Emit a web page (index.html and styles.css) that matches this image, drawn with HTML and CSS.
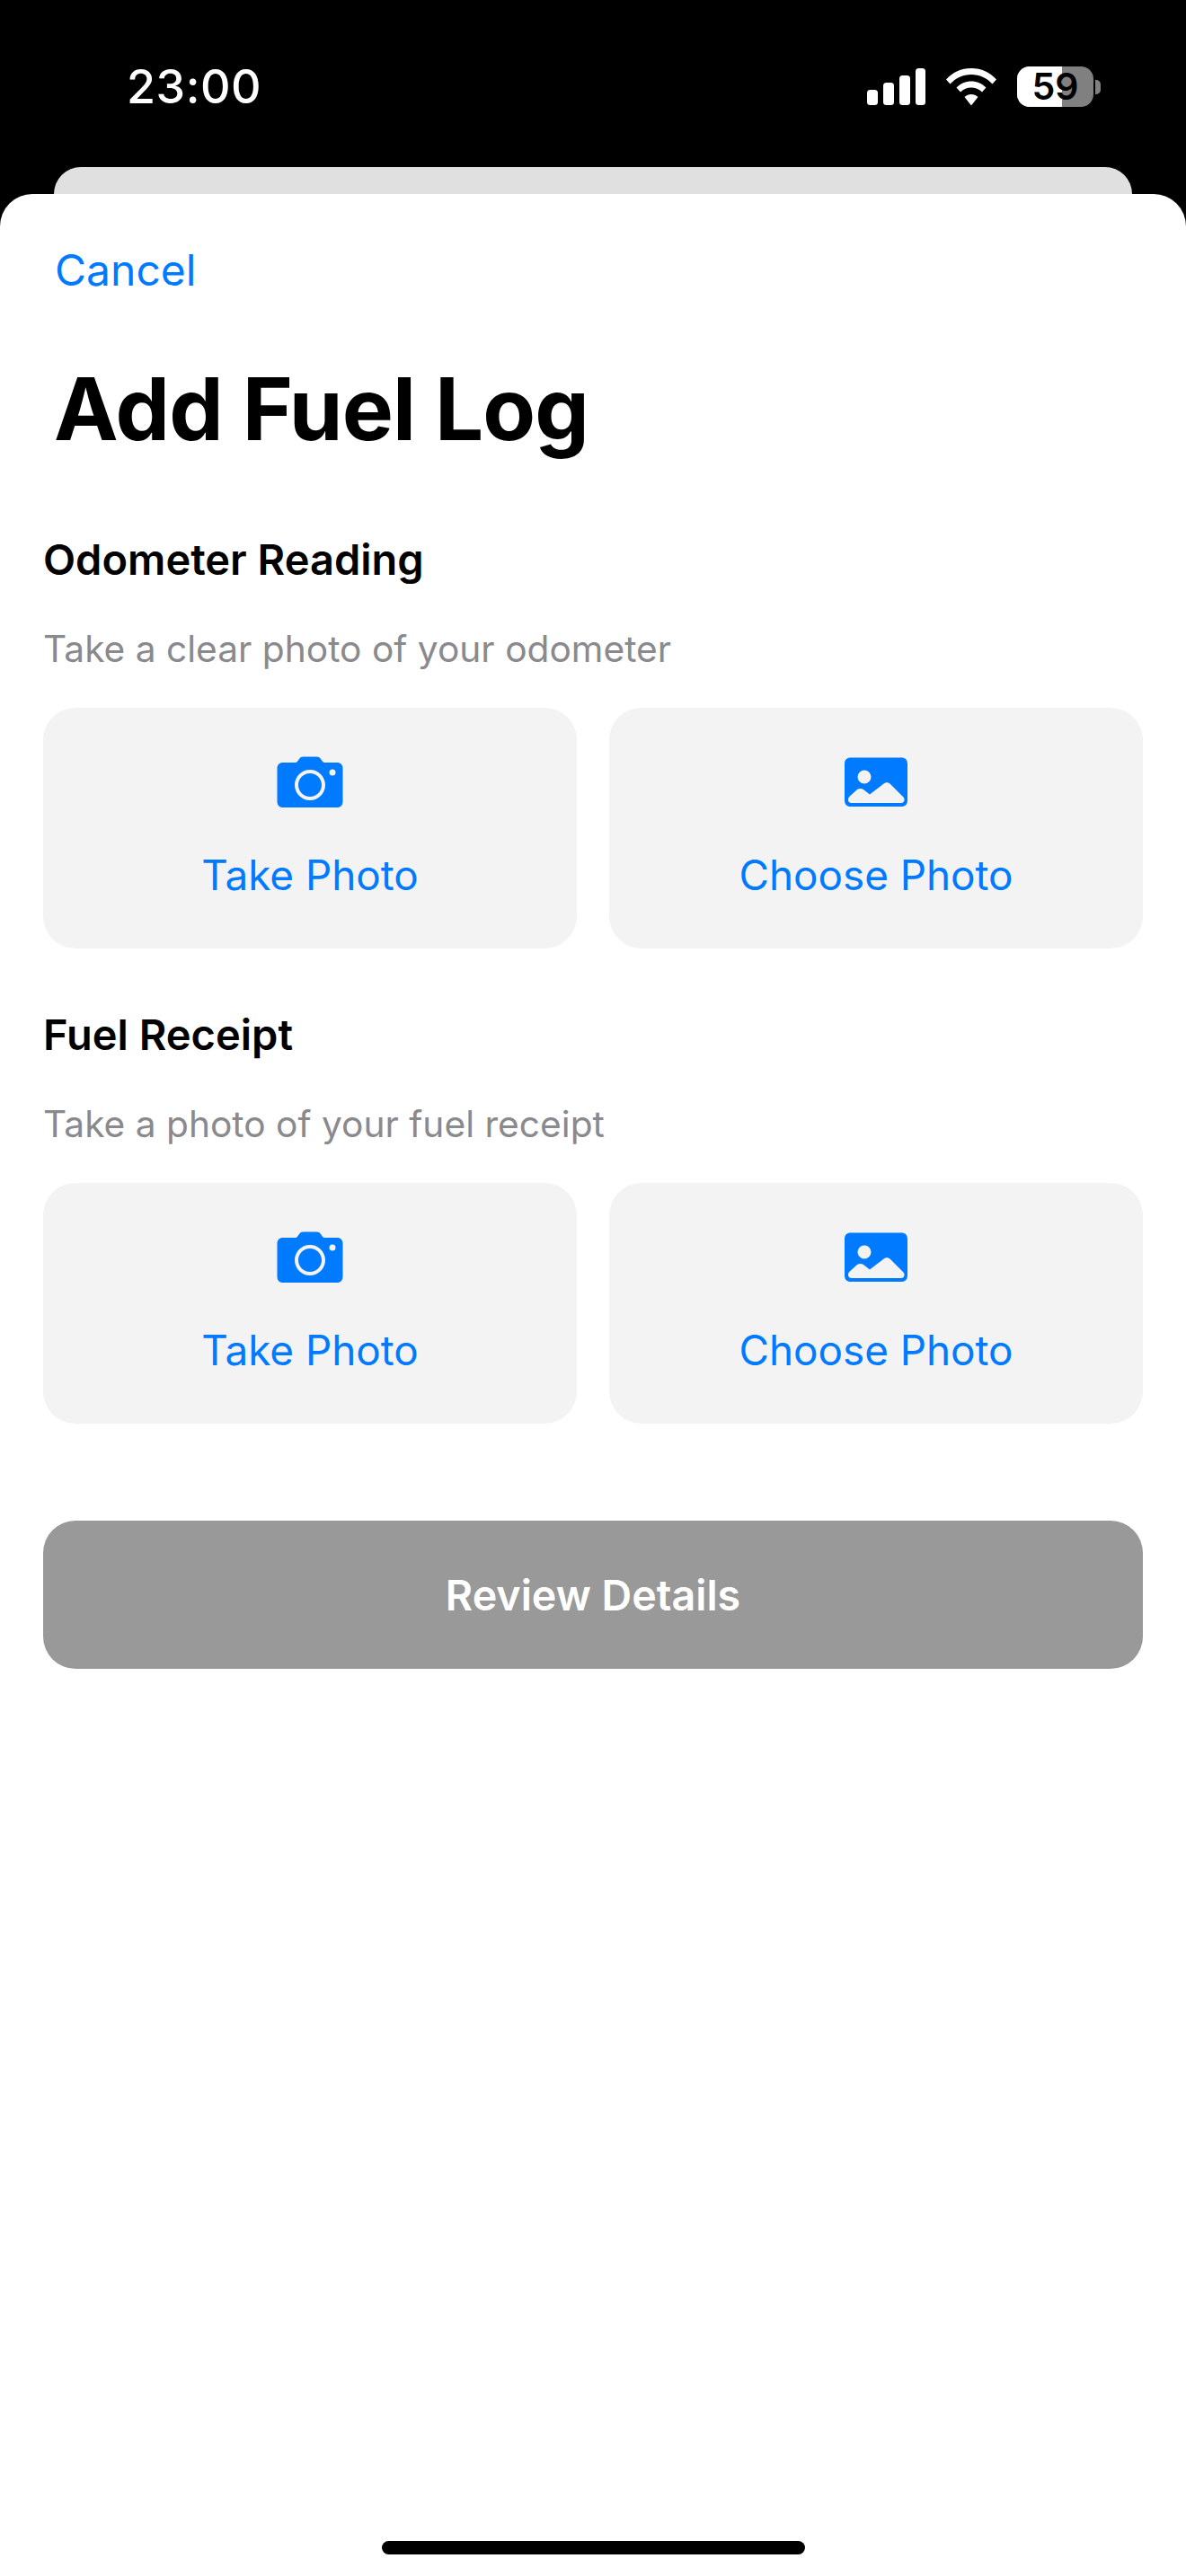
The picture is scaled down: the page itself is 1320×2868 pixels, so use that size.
FILE: index.html
```html
<!DOCTYPE html>
<html lang="en">
<head>
<meta charset="utf-8">
<title>Add Fuel Log</title>
<link rel="stylesheet" href="styles.css">
</head>
<body>
<div class="screen">
  <header class="status">
    <span class="time">23:00</span>
    <div class="indicators">
      <svg class="signal" width="65" height="42" viewBox="0 0 65 42"><rect x="0" y="24" width="12" height="17" rx="3.500"/><rect x="18" y="16" width="12" height="25" rx="3.500"/><rect x="36" y="8" width="12" height="33" rx="3.500"/><rect x="54" y="0" width="11" height="41" rx="3.500"/></svg>
      <svg class="wifi" width="58" height="42" viewBox="0 0 58 42"><path d="M29 0C40 0 50 4.500 57 12.500L52.500 17.500C46.500 11 38 7 29 7S11.500 11 5.500 17.500L1 12.500C8 4.500 18 0 29 0Z"/><path d="M29 14.500C35 14.500 41 17 45.500 21.500L41 26.500C37.500 23 33.500 21.500 29 21.500S20.500 23 17 26.500L12.500 21.500C17 17 23 14.500 29 14.500Z"/><path d="M29 29C31.800 29 34.500 30 36.500 32L29 41.500L21.500 32C23.500 30 26.200 29 29 29Z"/></svg>
      <div class="battery">
        <div class="battery-body"><div class="battery-fill"></div><span class="battery-level">59</span></div>
        <div class="battery-cap"></div>
      </div>
    </div>
  </header>
  <div class="back-card"></div>
  <main class="sheet">
    <button class="cancel">Cancel</button>
    <h1 class="title">Add Fuel Log</h1>

    <section class="section">
      <h2 class="section-title">Odometer Reading</h2>
      <p class="hint">Take a clear photo of your odometer</p>
      <div class="actions">
        <button class="action">
          <svg class="icon" width="74" height="58" viewBox="0 0 74 58"><path class="glyph" fill-rule="evenodd" d="M7 7H20C21.500 7 22.300 6.400 23.200 5.400L25 3C26.200 1.300 27.500 0.500 29.500 0.500H44.500C46.500 0.500 47.800 1.300 49 3L50.800 5.400C51.700 6.400 52.500 7 54 7H67C71 7 73.500 9.500 73.500 13.500V50C73.500 54.500 71 57 67 57H7C3 57 0.500 54.500 0.500 50V13.500C0.500 9.500 3 7 7 7ZM37 15C27.600 15 20 22.600 20 32S27.600 49 37 49 54 41.400 54 32 46.400 15 37 15ZM37 19C44.200 19 50 24.800 50 32S44.200 45 37 45 24 39.200 24 32 29.800 19 37 19ZM62 14.500A3.500 3.500 0 1 0 62 21.500A3.500 3.500 0 1 0 62 14.500Z"/></svg>
          <span class="action-label">Take Photo</span>
        </button>
        <button class="action">
          <svg class="icon" width="72" height="56" viewBox="0 0 72 56"><path class="glyph" fill-rule="evenodd" d="M8 0.500H64C68.500 0.500 71 3 71 7.500V48C71 52.500 68.500 55 64 55H8C3.500 55 1 52.500 1 48V7.500C1 3 3.500 0.500 8 0.500ZM23 14.500A7.500 7.500 0 1 0 23 29.500A7.500 7.500 0 1 0 23 14.500ZM5 47.500C5 49.800 6.500 51 8.500 51H64C66 51 67.500 49.800 67.500 47.500C67.500 46 67 45 66 44L52 30C49.500 27.500 46.500 27.500 44 30L29 41.500L22 36C20 34.500 17 34.500 15 36L6.500 43.800C5.500 44.800 5 46 5 47.500Z"/></svg>
          <span class="action-label">Choose Photo</span>
        </button>
      </div>
    </section>

    <section class="section">
      <h2 class="section-title">Fuel Receipt</h2>
      <p class="hint">Take a photo of your fuel receipt</p>
      <div class="actions">
        <button class="action">
          <svg class="icon" width="74" height="58" viewBox="0 0 74 58"><path class="glyph" fill-rule="evenodd" d="M7 7H20C21.500 7 22.300 6.400 23.200 5.400L25 3C26.200 1.300 27.500 0.500 29.500 0.500H44.500C46.500 0.500 47.800 1.300 49 3L50.800 5.400C51.700 6.400 52.500 7 54 7H67C71 7 73.500 9.500 73.500 13.500V50C73.500 54.500 71 57 67 57H7C3 57 0.500 54.500 0.500 50V13.500C0.500 9.500 3 7 7 7ZM37 15C27.600 15 20 22.600 20 32S27.600 49 37 49 54 41.400 54 32 46.400 15 37 15ZM37 19C44.200 19 50 24.800 50 32S44.200 45 37 45 24 39.200 24 32 29.800 19 37 19ZM62 14.500A3.500 3.500 0 1 0 62 21.500A3.500 3.500 0 1 0 62 14.500Z"/></svg>
          <span class="action-label">Take Photo</span>
        </button>
        <button class="action">
          <svg class="icon" width="72" height="56" viewBox="0 0 72 56"><path class="glyph" fill-rule="evenodd" d="M8 0.500H64C68.500 0.500 71 3 71 7.500V48C71 52.500 68.500 55 64 55H8C3.500 55 1 52.500 1 48V7.500C1 3 3.500 0.500 8 0.500ZM23 14.500A7.500 7.500 0 1 0 23 29.500A7.500 7.500 0 1 0 23 14.500ZM5 47.500C5 49.800 6.500 51 8.500 51H64C66 51 67.500 49.800 67.500 47.500C67.500 46 67 45 66 44L52 30C49.500 27.500 46.500 27.500 44 30L29 41.500L22 36C20 34.500 17 34.500 15 36L6.500 43.800C5.500 44.800 5 46 5 47.500Z"/></svg>
          <span class="action-label">Choose Photo</span>
        </button>
      </div>
    </section>

    <button class="review">Review Details</button>
    <div class="home-indicator"></div>
  </main>
</div>
</body>
</html>
```
FILE: styles.css
```css
* { box-sizing: border-box; margin: 0; padding: 0; }
html, body { width: 1320px; height: 2868px; overflow: hidden; background: #000; }
body { font-family: "Inter", "Liberation Sans", sans-serif; }
button { border: 0; background: none; font-family: inherit; cursor: pointer; }

.screen { width: 1320px; height: 2868px; display: flex; flex-direction: column; background: #000; }

.status { height: 186px; flex: none; display: flex; justify-content: space-between; align-items: flex-start; padding: 70px 95px 0 141px; color: #fff; }
.time { font-size: 52px; line-height: 54px; font-weight: 500; letter-spacing: 0.5px; }
.indicators { display: flex; align-items: flex-start; gap: 22px; margin-top: 6px; }
.signal, .wifi { fill: #fff; }
.battery { display: flex; align-items: center; margin-top: -2px; }
.battery-body { position: relative; width: 85px; height: 45px; border-radius: 14px; background: #808080; text-align: center; }
.battery-fill { position: absolute; left: 0; top: 0; bottom: 0; width: 50px; border-radius: 14px 0 0 14px; background: #fff; }
.battery-level { position: relative; display: block; font-size: 41px; line-height: 45px; font-weight: 600; color: #000; }
.battery-cap { width: 6px; height: 16px; margin-left: 2px; border-radius: 0 5px 5px 0; background: #808080; }

.back-card { height: 30px; flex: none; margin: 0 60px; border-radius: 30px 30px 0 0; background: #e0e0e0; }

.sheet { flex: 1; position: relative; display: flex; flex-direction: column; padding: 55px 48px 0; background: #fff; border-radius: 36px 36px 0 0; }

.cancel { align-self: flex-start; margin-left: 13px; font-size: 48px; line-height: 60px; color: #007aff; }
.title { margin: 66px 0 0 12px; font-size: 96px; line-height: 116px; font-weight: 700; color: #000; letter-spacing: -0.9px; }

.section { margin-top: 81px; }
.section + .section { margin-top: 67px; }
.section-title { font-size: 47px; line-height: 58px; font-weight: 600; color: #000; }
.hint { margin-top: 46px; font-size: 40.7px; line-height: 50px; color: #8a8a8e; }
.actions { margin-top: 40px; display: flex; gap: 36px; }
.action { flex: 1; height: 268px; display: flex; flex-direction: column; align-items: center; background: #f3f3f3; border-radius: 36px; padding-top: 54px; }
.icon { flex: none; height: 58px; }
.glyph { fill: #007aff; }
.action-label { margin-top: 46px; font-size: 45.8px; line-height: 58px; color: #007aff; }

.review { margin-top: 108px; height: 165px; flex: none; border-radius: 36px; background: #999; color: #fff; font-size: 46.6px; font-weight: 600; }

.home-indicator { position: absolute; left: 425px; bottom: 24px; width: 471px; height: 15px; border-radius: 8px; background: #000; }
```
